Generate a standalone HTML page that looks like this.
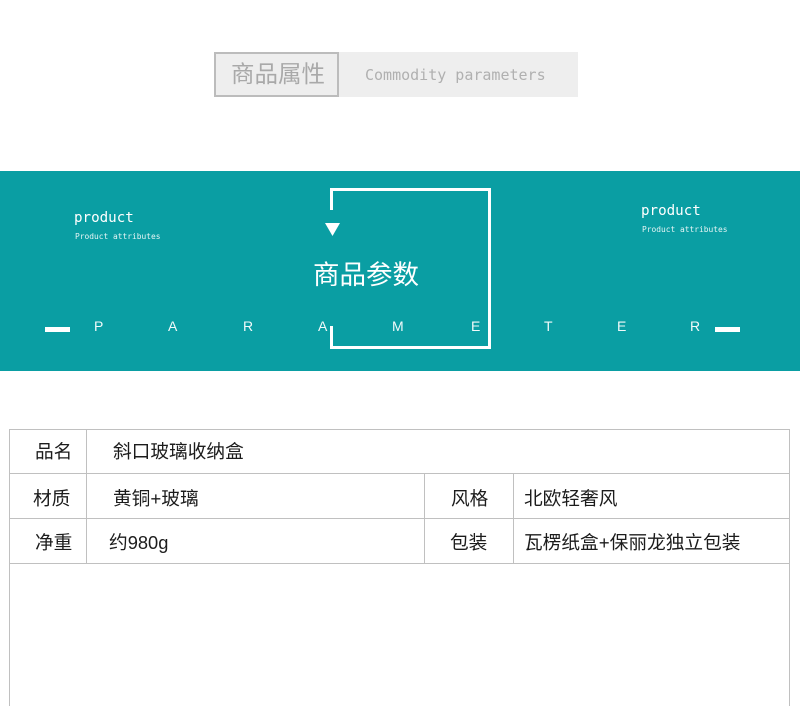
<!DOCTYPE html>
<html lang="zh">
<head>
<meta charset="utf-8">
<style>
html,body{margin:0;padding:0;background:#fff}
#p{position:relative;width:800px;height:706px;overflow:hidden;background:#fff;font-family:"Liberation Sans","Noto Sans CJK SC",sans-serif}
#p div{position:absolute}
.t{white-space:nowrap;line-height:1}
.m{font-family:"DejaVu Sans Mono","Liberation Mono",monospace}
.l{background:#c0c0c0}
.w{background:#fff}
.c{font-size:18.7px;color:#1c1c1c;white-space:nowrap;line-height:1}
.L{color:#f2fafa;font-size:14px;line-height:1;font-family:"Liberation Sans",sans-serif}
</style>
</head>
<body>
<div id="p">
  <div style="left:214px;top:52px;width:364px;height:45px;background:#eee"></div>
  <div style="left:214px;top:52px;width:121px;height:41px;border:2px solid #bcbcbc"></div>
  <div class="t" style="left:231px;top:63px;font-size:23.5px;color:#a9a9a9">商品属性</div>
  <div class="t m" style="left:365px;top:68px;font-size:15px;color:#b0b0b0">Commodity parameters</div>

  <div style="left:0;top:171px;width:800px;height:200px;background:#0a9ea3"></div>
  <div class="w" style="left:330px;top:188px;width:161px;height:3px"></div>
  <div class="w" style="left:330px;top:346px;width:161px;height:3px"></div>
  <div class="w" style="left:488px;top:188px;width:3px;height:161px"></div>
  <div class="w" style="left:330px;top:188px;width:3px;height:22px"></div>
  <div class="w" style="left:330px;top:326px;width:3px;height:23px"></div>
  <svg style="position:absolute;left:325px;top:223px" width="15" height="13"><path d="M0 0H15L7.5 13Z" fill="#fff"/></svg>
  <div class="t" style="left:313px;top:262px;font-size:26.5px;color:#fff">商品参数</div>

  <div class="t m" style="left:74px;top:211px;font-size:14.2px;color:#fff">product</div>
  <div class="t m" style="left:75px;top:233px;font-size:7.9px;color:#e6f5f5">Product attributes</div>
  <div class="t m" style="left:641px;top:204px;font-size:14.2px;color:#fff">product</div>
  <div class="t m" style="left:642px;top:226px;font-size:7.9px;color:#e6f5f5">Product attributes</div>

  <div class="w" style="left:45px;top:327px;width:25px;height:5px"></div>
  <div class="w" style="left:715px;top:327px;width:25px;height:5px"></div>
  <div class="t L" style="left:94px;top:319px">P</div>
  <div class="t L" style="left:168px;top:319px">A</div>
  <div class="t L" style="left:243px;top:319px">R</div>
  <div class="t L" style="left:318px;top:319px">A</div>
  <div class="t L" style="left:392px;top:319px">M</div>
  <div class="t L" style="left:471px;top:319px">E</div>
  <div class="t L" style="left:544px;top:319px">T</div>
  <div class="t L" style="left:617px;top:319px">E</div>
  <div class="t L" style="left:690px;top:319px">R</div>

  <div class="l" style="left:9px;top:429px;width:781px;height:1px"></div>
  <div class="l" style="left:9px;top:473px;width:781px;height:1px"></div>
  <div class="l" style="left:9px;top:518px;width:781px;height:1px"></div>
  <div class="l" style="left:9px;top:563px;width:781px;height:1px"></div>
  <div class="l" style="left:9px;top:429px;width:1px;height:277px"></div>
  <div class="l" style="left:789px;top:429px;width:1px;height:277px"></div>
  <div class="l" style="left:86px;top:429px;width:1px;height:134px"></div>
  <div class="l" style="left:424px;top:473px;width:1px;height:90px"></div>
  <div class="l" style="left:513px;top:473px;width:1px;height:90px"></div>

  <div class="c" style="left:35px;top:443px">品名</div>
  <div class="c" style="left:113px;top:443px">斜口玻璃收纳盒</div>
  <div class="c" style="left:33px;top:490px">材质</div>
  <div class="c" style="left:113px;top:490px">黄铜+玻璃</div>
  <div class="c" style="left:451px;top:490px">风格</div>
  <div class="c" style="left:524px;top:490px">北欧轻奢风</div>
  <div class="c" style="left:35px;top:534px">净重</div>
  <div class="c" style="left:109px;top:534px">约<span style="font-size:18.3px">980g</span></div>
  <div class="c" style="left:450px;top:534px">包装</div>
  <div class="c" style="left:524px;top:534px">瓦楞纸盒+保丽龙独立包装</div>
</div>
</body>
</html>
